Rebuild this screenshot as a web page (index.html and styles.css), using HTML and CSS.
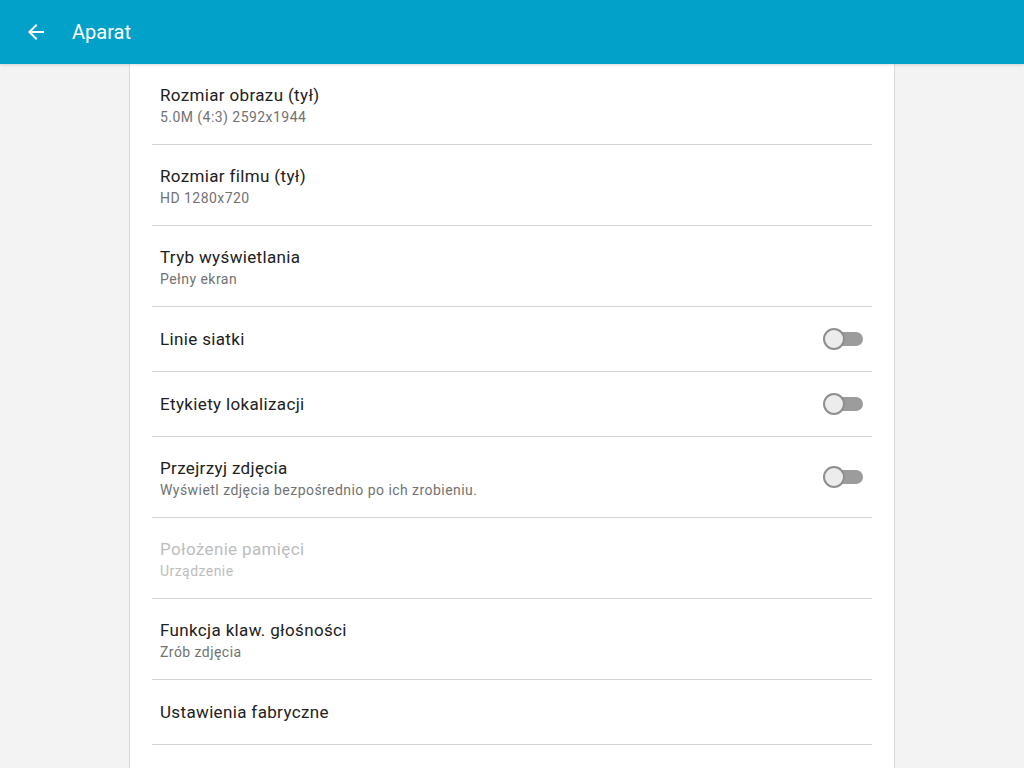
FILE: index.html
```html
<!DOCTYPE html>
<html lang="pl">
<head>
    <meta charset="UTF-8">
    <meta name="viewport" content="width=device-width, initial-scale=1.0">
    <title>Aparat</title>
    <link rel="stylesheet" href="styles.css">
</head>
<body>
    <header class="app-bar">
        <span class="back">
            <svg width="24" height="24" viewBox="0 0 24 24"><path d="M20 11H7.83l5.59-5.59L12 4l-8 8 8 8 1.41-1.41L7.83 13H20v-2z" fill="#ffffff"/></svg>
        </span>
        <h1 class="title">Aparat</h1>
    </header>

    <main class="card">
        <div class="row double">
            <div class="texts">
                <div class="label">Rozmiar obrazu (tył)</div>
                <div class="summary">5.0M (4:3) 2592x1944</div>
            </div>
        </div>
        <div class="row double">
            <div class="texts">
                <div class="label">Rozmiar filmu (tył)</div>
                <div class="summary">HD 1280x720</div>
            </div>
        </div>
        <div class="row double">
            <div class="texts">
                <div class="label">Tryb wyświetlania</div>
                <div class="summary">Pełny ekran</div>
            </div>
        </div>
        <div class="row single">
            <div class="texts">
                <div class="label">Linie siatki</div>
            </div>
            <span class="switch"><span class="thumb"></span></span>
        </div>
        <div class="row single">
            <div class="texts">
                <div class="label">Etykiety lokalizacji</div>
            </div>
            <span class="switch"><span class="thumb"></span></span>
        </div>
        <div class="row double">
            <div class="texts">
                <div class="label">Przejrzyj zdjęcia</div>
                <div class="summary">Wyświetl zdjęcia bezpośrednio po ich zrobieniu.</div>
            </div>
            <span class="switch"><span class="thumb"></span></span>
        </div>
        <div class="row double disabled">
            <div class="texts">
                <div class="label">Położenie pamięci</div>
                <div class="summary">Urządzenie</div>
            </div>
        </div>
        <div class="row double">
            <div class="texts">
                <div class="label">Funkcja klaw. głośności</div>
                <div class="summary">Zrób zdjęcia</div>
            </div>
        </div>
        <div class="row single">
            <div class="texts">
                <div class="label">Ustawienia fabryczne</div>
            </div>
        </div>
    </main>
</body>
</html>
```

FILE: styles.css
```css
/* Camera settings screen */
body {
    margin: 0;
    font-family: Roboto, "Noto Sans", sans-serif;
    background-color: #f3f3f3;
    height: 768px;
    overflow: hidden;
    display: flex;
    flex-direction: column;
}

.app-bar {
    height: 64px;
    flex-shrink: 0;
    background-color: #02a1c9;
    display: flex;
    align-items: center;
    box-shadow: 0 1px 3px rgba(0, 0, 0, 0.15);
    position: relative;
    z-index: 1;
}

.back {
    width: 24px;
    height: 24px;
    margin-left: 24px;
    display: flex;
}

.title {
    margin: 0 0 0 24px;
    font-size: 20px;
    font-weight: 400;
    color: #ffffff;
}

.card {
    width: 766px;
    margin: 0 auto;
    flex: 1;
    background-color: #ffffff;
    border-left: 1px solid #dcdcdc;
    border-right: 1px solid #dcdcdc;
    padding: 0 22px;
    box-sizing: border-box;
}

.row {
    display: flex;
    align-items: center;
    border-bottom: 1px solid #d4d4d4;
    padding: 0 9px 0 8px;
}

.row.double {
    height: 80px;
}

.row.single {
    height: 64px;
}

.texts {
    flex: 1;
    padding-top: 2px;
}

.row.single .texts {
    padding-top: 0;
}

.label {
    font-size: 17px;
    line-height: 22px;
    letter-spacing: 0.35px;
    color: #212121;
}

.summary {
    font-size: 14px;
    line-height: 20px;
    letter-spacing: 0.45px;
    color: #727272;
    margin-top: 1px;
}

.disabled .label,
.disabled .summary {
    color: #bdbdbd;
}

/* Switch, off state */
.switch {
    position: relative;
    width: 40px;
    height: 22px;
    display: block;
}

.switch::before {
    content: "";
    position: absolute;
    right: 0;
    top: 4px;
    width: 34px;
    height: 14px;
    border-radius: 7px;
    background-color: #9c9c9c;
}

.thumb {
    position: absolute;
    left: 0;
    top: 0;
    width: 18px;
    height: 18px;
    border-radius: 50%;
    background-color: #ececec;
    border: 2px solid #8f8f8f;
}
```
